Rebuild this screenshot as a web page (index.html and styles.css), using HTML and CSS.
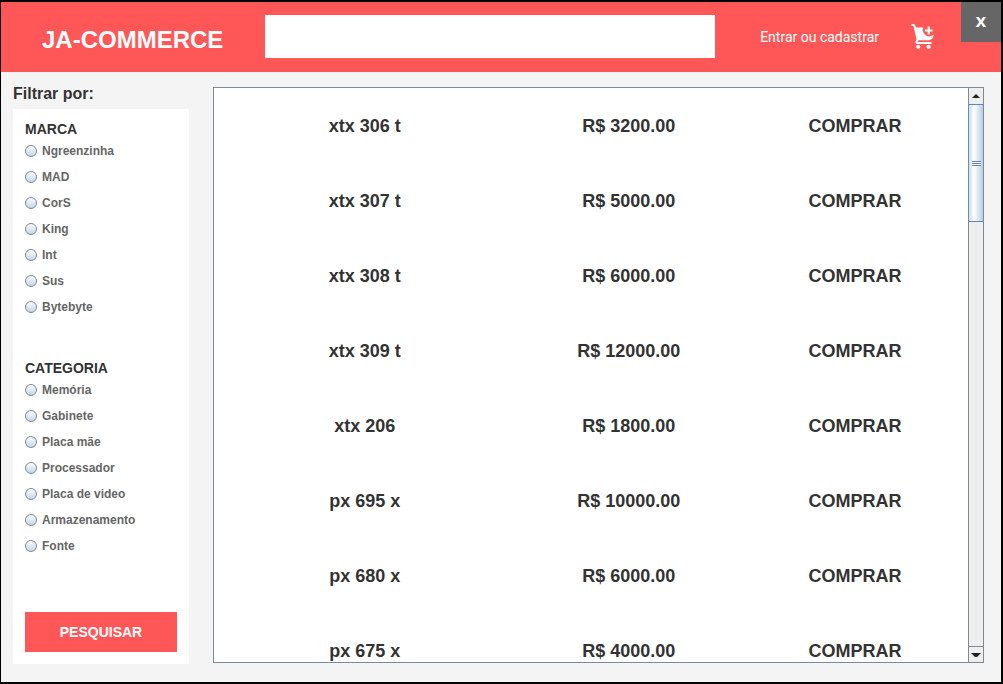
FILE: index.html
```html
<!DOCTYPE html>
<html lang="pt-BR">
<head>
<meta charset="utf-8">
<meta name="viewport" content="width=device-width, initial-scale=1">
<title>JA-COMMERCE</title>
<link rel="stylesheet" href="styles.css">
</head>
<body>
<div class="window">
  <header class="topbar">
    <h1 class="brand">JA-COMMERCE</h1>
    <input class="search" type="text" aria-label="Buscar produtos">
    <div class="actions">
      <a class="login" href="#">Entrar ou cadastrar</a>
      <button class="cart" type="button" aria-label="Carrinho">
        <svg width="24" height="26" viewBox="0 0 24 26" fill="none" aria-hidden="true">
          <path d="M3 3.5H12.2A6.6 6.6 0 0 0 22.8 10.6C22.2 14.4 20.3 16.3 18 16.3H7.4Z" fill="#fff"/>
          <path d="M0.5 1H2.2Q3.3 1 3.6 2.2L6.6 15.8L5.6 17.3Q5 19 6.8 19H20.5" stroke="#fff" stroke-width="2"/>
          <path d="M17.7 2.6V10.4M13.8 6.5H21.6" stroke="#fff" stroke-width="2"/>
          <circle cx="7.2" cy="22.8" r="2.1" fill="#fff"/>
          <circle cx="17.6" cy="22.8" r="2.1" fill="#fff"/>
        </svg>
      </button>
      <button class="close" type="button">X</button>
    </div>
  </header>
  <main class="content">
    <form class="sidebar">
      <h2 class="sidebar-title">Filtrar por:</h2>
      <div class="filters">
        <fieldset class="group">
          <legend class="group-title">MARCA</legend>
          <label class="option"><input class="radio" type="radio" name="marca">Ngreenzinha</label>
          <label class="option"><input class="radio" type="radio" name="marca">MAD</label>
          <label class="option"><input class="radio" type="radio" name="marca">CorS</label>
          <label class="option"><input class="radio" type="radio" name="marca">King</label>
          <label class="option"><input class="radio" type="radio" name="marca">Int</label>
          <label class="option"><input class="radio" type="radio" name="marca">Sus</label>
          <label class="option"><input class="radio" type="radio" name="marca">Bytebyte</label>
        </fieldset>
        <fieldset class="group">
          <legend class="group-title">CATEGORIA</legend>
          <label class="option"><input class="radio" type="radio" name="categoria">Memória</label>
          <label class="option"><input class="radio" type="radio" name="categoria">Gabinete</label>
          <label class="option"><input class="radio" type="radio" name="categoria">Placa mãe</label>
          <label class="option"><input class="radio" type="radio" name="categoria">Processador</label>
          <label class="option"><input class="radio" type="radio" name="categoria">Placa de video</label>
          <label class="option"><input class="radio" type="radio" name="categoria">Armazenamento</label>
          <label class="option"><input class="radio" type="radio" name="categoria">Fonte</label>
        </fieldset>
        <button class="submit" type="button">PESQUISAR</button>
      </div>
    </form>
    <section class="list">
      <div class="viewport">
        <table class="products">
          <tbody>
            <tr><td class="name">xtx 306 t</td><td class="price">R$ 3200.00</td><td><button class="buy" type="button">COMPRAR</button></td></tr>
            <tr><td class="name">xtx 307 t</td><td class="price">R$ 5000.00</td><td><button class="buy" type="button">COMPRAR</button></td></tr>
            <tr><td class="name">xtx 308 t</td><td class="price">R$ 6000.00</td><td><button class="buy" type="button">COMPRAR</button></td></tr>
            <tr><td class="name">xtx 309 t</td><td class="price">R$ 12000.00</td><td><button class="buy" type="button">COMPRAR</button></td></tr>
            <tr><td class="name">xtx 206</td><td class="price">R$ 1800.00</td><td><button class="buy" type="button">COMPRAR</button></td></tr>
            <tr><td class="name">px 695 x</td><td class="price">R$ 10000.00</td><td><button class="buy" type="button">COMPRAR</button></td></tr>
            <tr><td class="name">px 680 x</td><td class="price">R$ 6000.00</td><td><button class="buy" type="button">COMPRAR</button></td></tr>
            <tr><td class="name">px 675 x</td><td class="price">R$ 4000.00</td><td><button class="buy" type="button">COMPRAR</button></td></tr>
          </tbody>
        </table>
      </div>
      <div class="scrollbar">
        <button class="arrow" type="button" aria-label="Rolar para cima">
          <svg width="8" height="4" viewBox="0 0 8 4" aria-hidden="true"><path d="M4 0L8 4H0Z" fill="#222"/></svg>
        </button>
        <div class="track">
          <div class="thumb"><span class="grip"></span></div>
        </div>
        <button class="arrow arrow-down" type="button" aria-label="Rolar para baixo">
          <svg width="10" height="4" viewBox="0 0 10 4" aria-hidden="true"><path d="M0 0H10L6 4H4Z" fill="#222"/></svg>
        </button>
      </div>
    </section>
  </main>
</div>
</body>
</html>
```
FILE: styles.css
```css
* {
  box-sizing: border-box;
}

body {
  margin: 0;
  font-family: "Liberation Sans", Arial, sans-serif;
  font-weight: bold;
  color: #333;
}

button {
  margin: 0;
  padding: 0;
  border: 0;
  background: none;
  font: inherit;
  color: inherit;
  cursor: pointer;
}

.window {
  display: flex;
  flex-direction: column;
  height: 100vh;
  border: solid #000;
  border-width: 2px 2px 2px 1px;
  background: #f4f4f4;
}

.topbar {
  display: grid;
  grid-template-columns: 264px 1fr 286px;
  align-items: center;
  height: 70px;
  padding-bottom: 1px;
  flex: none;
  background: #ff5757;
  color: #fff;
}

.brand {
  margin: 0;
  padding: 7px 0 0 41px;
  font-size: 24px;
  line-height: 28px;
}

.search {
  width: 100%;
  height: 43px;
  padding: 0 12px;
  border: 0;
  background: #fff;
  font: inherit;
  font-size: 16px;
}

.actions {
  display: flex;
  align-items: center;
  justify-content: flex-end;
  height: 100%;
}

.login {
  margin-right: 32px;
  font-family: Roboto, sans-serif;
  font-size: 14px;
  font-weight: normal;
  line-height: 20px;
  white-space: nowrap;
  color: #fff;
  text-decoration: none;
}

.cart {
  display: flex;
  margin-right: 26px;
}

.close {
  align-self: flex-start;
  width: 40px;
  height: 40px;
  background: #666;
  font-family: "DejaVu Sans", sans-serif;
  font-size: 14px;
}

.content {
  display: flex;
  flex: 1;
  gap: 24px;
  min-height: 0;
  padding: 0 17px 18px 12px;
}

.sidebar {
  display: flex;
  flex-direction: column;
  flex: none;
  width: 176px;
}

.sidebar-title {
  margin: 0;
  padding: 13px 0 6px;
  font-size: 16px;
  line-height: 18px;
}

.filters {
  display: flex;
  flex: 1;
  flex-direction: column;
  gap: 40px;
  padding: 12px;
  background: #fff;
}

.group {
  min-width: 0;
  margin: 0;
  padding: 0;
  border: 0;
}

.group-title {
  padding: 0;
  font-size: 14px;
  line-height: 17px;
}

.option {
  display: flex;
  align-items: center;
  gap: 5px;
  height: 26px;
  font-size: 12px;
  color: #666;
}

.radio {
  appearance: none;
  width: 12px;
  height: 12px;
  margin: 0;
  border: 1px solid #7a8a99;
  border-radius: 50%;
  background: linear-gradient(#fff, #dfe9f3 50%, #c3d6e8);
}

.radio:checked {
  background: radial-gradient(circle, #333 35%, #dfe9f3 40%);
}

.submit {
  height: 40px;
  margin-top: auto;
  background: #ff5757;
  font-size: 14px;
  color: #fff;
}

.list {
  display: flex;
  flex: 1;
  min-width: 0;
  margin: 15px 0 1px;
  border: 1px solid #7a8a99;
  background: #fff;
}

.viewport {
  flex: 1;
  overflow: hidden;
}

.products {
  width: 100%;
  table-layout: fixed;
  border-collapse: collapse;
  font-size: 18px;
  text-align: center;
}

.products td {
  height: 75px;
  padding: 2px 0 0;
}

.name {
  width: 40%;
}

.price {
  width: 30%;
}

.scrollbar {
  display: flex;
  flex: none;
  flex-direction: column;
  width: 15px;
  border-left: 1px solid #7a8a99;
  background: #eee;
}

.arrow {
  display: flex;
  align-items: center;
  justify-content: center;
  height: 16px;
}

.arrow-down {
  border-top: 1px solid #7a8a99;
}

.track {
  flex: 1;
}

.thumb {
  display: flex;
  align-items: center;
  justify-content: center;
  height: 118px;
  border: solid #6382bf;
  border-width: 1px 0;
  background: linear-gradient(to right, #c8ddf2, #fff 35%, #b8cfe5);
}

.grip {
  width: 9px;
  height: 5px;
  border: solid #6382bf;
  border-width: 1px 0;
  background: linear-gradient(#fff 1px, #6382bf 1px, #6382bf 2px, #fff 2px);
}
```
